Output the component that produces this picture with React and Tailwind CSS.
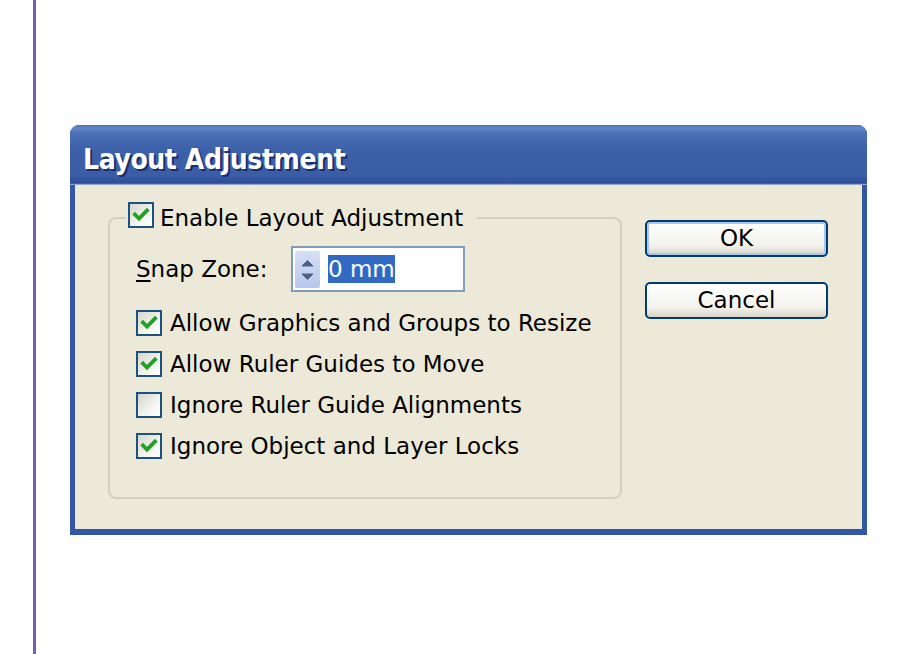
import React from 'react'

const FONT = { fontFamily: '"DejaVu Sans", Tahoma, sans-serif' }

function Check({ checked }) {
  return (
    <span className="flex h-[26px] w-[26px] shrink-0 items-center justify-center border-2 border-[#1c5180] bg-[linear-gradient(135deg,#d6d5cc,#f4f4f0_60%,#ffffff)]">
      {checked && (
        <svg width="20" height="20" viewBox="0 0 20 20">
          <path d="M4 9.5 L8 13.5 L16 5.5" fill="none" stroke="#21a121" strokeWidth="3.8" strokeLinecap="square" />
        </svg>
      )}
    </span>
  )
}

function Option({ checked, children }) {
  return (
    <div className="flex h-[26px] items-center gap-[8px]">
      <Check checked={checked} />
      <span className="text-[23px] leading-none text-black">{children}</span>
    </div>
  )
}

function Spinner() {
  return (
    <span className="flex h-[37px] w-[25px] shrink-0 items-center justify-center rounded-[2px] bg-[linear-gradient(to_bottom,#d6e0f6,#b6c7ee)]">
      <svg width="25" height="37" viewBox="0 0 25 37">
        <path d="M7 15 L12.5 9.5 L18 15 Z" fill="#4d6185" stroke="#4d6185" strokeWidth="1" strokeLinejoin="round" />
        <path d="M7 23 L12.5 28.5 L18 23 Z" fill="#4d6185" stroke="#4d6185" strokeWidth="1" strokeLinejoin="round" />
      </svg>
    </span>
  )
}

function Button({ children, isDefault }) {
  return (
    <button
      className={
        'flex h-[37px] w-[183px] items-center justify-center rounded-[5px] border-2 border-[#003c74] bg-[linear-gradient(to_bottom,#ffffff,#f3f2ec_70%,#d9d5c8)] text-[23px] leading-none text-black ' +
        (isDefault ? 'shadow-[inset_0_0_0_2px_#aac6ee]' : '')
      }
    >
      {children}
    </button>
  )
}

export default function App() {
  return (
    <div className="flex h-[654px] w-[924px] overflow-hidden bg-white" style={FONT}>
      <div className="ml-[33px] h-[654px] w-[3px] bg-[#7b5aa8]" />

      <div className="ml-[34px] mt-[125px] flex h-[410px] w-[797px] flex-col overflow-hidden rounded-t-[9px] bg-[#3357a4]">
        {/* Title bar */}
        <div className="flex h-[60px] items-center bg-[linear-gradient(to_bottom,#4a6fb5_0%,#6389cb_5%,#4a70b6_14%,#3d61a9_40%,#3a5da6_85%,#2c4c98_97%,#b9c6df_100%)] pl-[13px] pt-[10px]">
          <span
            className="text-[28px] font-bold leading-none tracking-[-0.4px] text-white [text-shadow:2px_2px_0_#1b2d6b]"
            style={{ fontFamily: '"DejaVu Sans Condensed", "DejaVu Sans", sans-serif' }}
          >
            Layout Adjustment
          </span>
        </div>

        {/* Body */}
        <div className="mx-[5px] mb-[6px] flex flex-1 bg-[#ece9d8] pl-[33px] pt-[17px]">
          <fieldset className="h-[297px] w-[514px] rounded-[8px] border-2 border-[#d2d0c0]">
            <legend className="ml-[16px] flex items-center gap-[6px] pb-[6px] pl-[2px] pr-[14px]">
              <Check checked />
              <span className="translate-y-[3px] text-[23px] leading-none text-black">Enable Layout Adjustment</span>
            </legend>

            <div className="pl-[26px]">
              <div className="mt-[12px] flex items-center">
                <span className="w-[155px] text-[23px] leading-none text-black">
                  <span className="underline decoration-2 underline-offset-[3px]">S</span>nap Zone:
                </span>
                <div className="flex h-[46px] w-[174px] items-center border-2 border-[#7f9db9] bg-white px-[2px]">
                  <Spinner />
                  <span className="ml-[8px] flex h-[28px] items-center bg-[#316ac5] text-[23px] leading-none text-white">
                    0 mm
                  </span>
                </div>
              </div>

              <div className="mt-[18px] flex flex-col gap-[15px]">
                <Option checked>Allow Graphics and Groups to Resize</Option>
                <Option checked>Allow Ruler Guides to Move</Option>
                <Option>Ignore Ruler Guide Alignments</Option>
                <Option checked>Ignore Object and Layer Locks</Option>
              </div>
            </div>
          </fieldset>

          <div className="ml-[23px] mt-[18px] flex flex-col gap-[25px]">
            <Button isDefault>OK</Button>
            <Button>Cancel</Button>
          </div>
        </div>
      </div>
    </div>
  )
}
